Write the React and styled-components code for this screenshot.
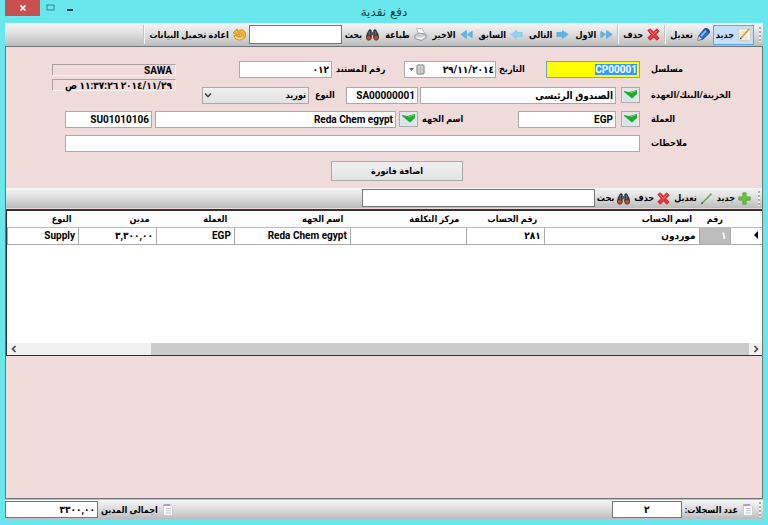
import React, { useEffect, useRef, useState } from "react";
import styled, { createGlobalStyle } from "styled-components";

const GlobalStyle = createGlobalStyle`
  * {
    box-sizing: border-box;
  }
  body {
    margin: 0;
  }
  body, button, input, select, table {
    font-family: Roboto, "DejaVu Sans Condensed", "DejaVu Sans", sans-serif;
    font-size: 10px;
    font-weight: bold;
    line-height: 14px;
    color: #000;
  }
  button, label, th, select {
    font-size: 9px;
  }
`;

const Window = styled.div`
  min-height: 100vh;
  display: flex;
  flex-direction: column;
  background: #69e7ec;
  padding: 0 5px 6px;
`;

const TitleBar = styled.header`
  display: grid;
  grid-template-columns: 1fr auto 1fr;
  height: 23px;
`;

const Title = styled.h1`
  margin: 0;
  padding-top: 3px;
  font-family: "DejaVu Sans", sans-serif;
  font-size: 12px;
  line-height: 18px;
  font-weight: normal;
  color: #16474a;
`;

const WindowButtons = styled.div`
  grid-column: 3;
  display: flex;
  justify-content: flex-end;
`;

const WindowBtn = styled.button`
  width: ${(props) => (props.$close ? "35px" : "20px")};
  height: 16px;
  padding: 0;
  border: 0;
  background: ${(props) => (props.$close ? "#c75050" : "transparent")};
  display: flex;
  align-items: center;
  justify-content: center;
`;

const Bar = styled.div`
  display: flex;
  align-items: center;
  height: ${(props) => props.$height || 23}px;
  padding-right: 2px;
  background: linear-gradient(#f6f6f6, #dcdcdc 50%, #bcbcbc);
`;

const Grip = styled.span`
  width: 2px;
  height: 15px;
  margin-left: 5px;
  background: repeating-linear-gradient(#aaa 0 2px, #f4f4f4 2px 4px);
`;

const ToolBtn = styled.button`
  display: flex;
  align-items: center;
  gap: ${(props) => (props.$compact ? 3 : 4)}px;
  height: 20px;
  padding: 0 ${(props) => (props.$compact ? 1 : 2)}px;
  border: 1px solid ${(props) => (props.$active ? "#5fa5e0" : "transparent")};
  background: ${(props) => (props.$active ? "#c5dff8" : "transparent")};
  white-space: nowrap;
`;

const Divider = styled.span`
  width: 1px;
  height: 19px;
  margin: 0 1px;
  background: #f8f8f8;
  border-left: 1px solid #c4c4c4;
  box-sizing: content-box;
`;

const Input = styled.input`
  height: ${(props) => props.$height || 17}px;
  width: ${(props) => (props.$width ? props.$width + "px" : "auto")};
  flex: ${(props) => (props.$width ? "none" : "1")};
  min-width: 0;
  margin: 0;
  padding: 0 2px;
  border: 1px solid ${(props) => (props.$dark ? "#777" : "#aaa")};
  border-radius: 0;
  outline: none;
  background: #fff;
  text-align: ${(props) => props.$align || "right"};
`;

const SerialInput = styled(Input)`
  background: #ff0;
  border-color: #6ba6c8;
  &::selection {
    background: #3399ff;
    color: #fff;
  }
`;

const Panel = styled.main`
  flex: 1;
  display: flex;
  flex-direction: column;
  background: #f0dbdb;
  border: 1px solid #6e7478;
`;

const Form = styled.form`
  display: flex;
  flex-direction: column;
  padding: 10px 30px 7px 59px;
`;

const FormTop = styled.div`
  display: flex;
  margin-left: -13px;
  justify-content: space-between;
`;

const Fields = styled.div`
  display: flex;
  flex-direction: column;
  gap: 2px;
`;

const Row = styled.div`
  display: flex;
  align-items: center;
  height: 24px;
`;

const Label = styled.label`
  width: ${(props) => props.$width}px;
  flex: none;
  text-align: left;
  white-space: nowrap;
`;

const RowLabel = styled(Label)`
  width: 81px;
  margin-left: 11px;
`;

const Gap = styled.span`
  flex: none;
  width: ${(props) => props.$size}px;
`;

const LookupBtn = styled.button`
  flex: none;
  display: flex;
  align-items: center;
  justify-content: center;
  width: 19px;
  height: 16px;
  padding: 0;
  margin-left: ${(props) => props.$gap}px;
  border: 1px solid #aaa;
  background: #e4e6e8;
`;

const DateBox = styled.div`
  display: flex;
  align-items: center;
  width: 92px;
  height: 17px;
  background: #fff;
  border: 1px solid #aaa;
`;

const DateInput = styled(Input)`
  border: 0;
  height: 15px;
  padding: 0 1px;
`;

const CalendarBtn = styled.button`
  display: flex;
  align-items: center;
  padding: 0 4px;
  border: 0;
  background: transparent;
`;

const SelectWrap = styled.div`
  display: grid;
  width: 107px;
  align-items: center;
  & > * {
    grid-area: 1 / 1;
  }
  svg {
    justify-self: end;
    margin-left: 2px;
    pointer-events: none;
  }
`;

const Select = styled.select`
  appearance: none;
  width: 100%;
  height: 17px;
  padding: 0 2px;
  border: 1px solid #aaa;
  border-radius: 0;
  background: linear-gradient(#f0f0f0, #e2e2e2);
`;

const Info = styled.div`
  width: 124px;
  display: flex;
  flex-direction: column;
  gap: 3px;
  padding-top: 7px;
`;

const InfoLine = styled.div`
  height: 12px;
  line-height: 11px;
  padding-right: 3px;
  border: 1px solid #a9a0a0;
  border-right-color: #faf2f2;
  border-bottom-color: #faf2f2;
  white-space: nowrap;
`;

const AddInvoiceBtn = styled.button`
  align-self: center;
  width: 132px;
  height: 20px;
  margin-top: 6px;
  margin-right: 3px;
  padding: 0;
  border: 1px solid #aaa;
  background: linear-gradient(#f0f0f0, #e4e4e4);
`;

const GridBox = styled.div`
  display: flex;
  flex-direction: column;
  height: 147px;
  margin-top: 1px;
  background: #fff;
  border: 1px solid #333;
  border-top-width: 2px;
  border-right: 0;
`;

const Table = styled.table`
  width: 100%;
  table-layout: fixed;
  border-collapse: collapse;
`;

const Th = styled.th`
  height: 16px;
  padding: 0 7px 0 0;
  text-align: right;
  background: #fcfcfc;
  border-bottom: 1px solid #bbb;
  white-space: nowrap;
`;

const Td = styled.td`
  height: 17px;
  padding: 0 3px 0 0;
  border-left: 1px solid #aaa;
  border-bottom: 1px solid #aaa;
  white-space: nowrap;
  background: ${(props) => (props.$selected ? "#bdbdbd" : "#fff")};
  color: ${(props) => (props.$selected ? "#fff" : "#000")};
`;

const ScrollBar = styled.div`
  display: flex;
  align-items: center;
  direction: ltr;
  height: 12px;
  margin-top: auto;
  background: #f0f0f0;
`;

const ScrollBtn = styled.button`
  width: 13px;
  height: 12px;
  padding: 0;
  border: 0;
  background: transparent;
  display: flex;
  align-items: center;
  justify-content: center;
`;

const Track = styled.div`
  flex: 1;
  display: flex;
  justify-content: flex-end;
`;

const Thumb = styled.div`
  width: 82%;
  height: 12px;
  background: #cbcbcb;
`;

const StatusBar = styled(Bar)`
  margin-top: 1px;
`;

const StatusLabel = styled.label`
  display: flex;
  align-items: center;
  gap: 4px;
  margin-left: 3px;
  white-space: nowrap;
`;

const Spacer = styled.span`
  flex: 1;
`;

const Svg = ({ children, size = 13 }) => (
  <svg width={size} height={size} viewBox="0 0 16 16" aria-hidden="true">
    {children}
  </svg>
);

const NoteIcon = () => (
  <Svg>
    <path d="M1 1h14v14H1z" fill="#fbf8ea" stroke="#c9c5b4" />
    <path d="M3 5h7M3 8h5M3 12h9" stroke="#d5d2c2" />
    <path d="M3 13L14 1" stroke="#e0a52a" strokeWidth="2.4" />
    <path d="M2 14.5l1-2.5 1.500 1z" fill="#333" />
  </Svg>
);

const PencilIcon = () => (
  <Svg>
    <path d="M1 15l1.500-6L9 1q5-1 6.500 5l-8.500 8z" fill="#2b6fc6" stroke="#1c4e94" />
    <path d="M5 10l7-7.500" stroke="#8fc3f5" strokeWidth="2" />
    <path d="M1 15l1.500-5 3.500 3.500z" fill="#f2d6a4" />
    <path d="M9.500 1.500L11 0q4 0 5 4.500L14.500 6z" fill="#254d86" />
  </Svg>
);

const CrossIcon = () => (
  <Svg>
    <path
      d="M1 3l3-2 4 4 4-4 3 3-4 4 4 4.500L12 15l-4-4-4 4-3-3 4-4z"
      fill="#e8373b"
      stroke="#b81b20"
    />
    <path d="M3 3.500l5 4.500 4-4.500" stroke="#ff8b8b" fill="none" />
  </Svg>
);

const ArrowIcon = ({ back, double, pale }) => (
  <Svg>
    <g
      transform={back ? "matrix(-1 0 0 1 16 0)" : undefined}
      fill={pale ? "#8fd4f0" : "#5cb4ea"}
      stroke={pale ? "#79bede" : "#469fd8"}
      strokeWidth=".7"
    >
      {double ? (
        <path d="M1 4l6 4-6 4zM8 3l7 5-7 5z" />
      ) : (
        <path d="M1 5.500h7V3l7 5-7 5v-2.500H1z" />
      )}
    </g>
  </Svg>
);

const PrinterIcon = () => (
  <Svg>
    <path d="M3 1l7-.5 3 6-7 2z" fill="#fff" stroke="#aaa" />
    <path d="M1 9l5-3 9 2v4l-6 3.500L1 13z" fill="#c9ccd0" stroke="#868a90" />
    <path d="M3 12l6 1 4-2" stroke="#f5f5f5" strokeWidth="2" fill="none" />
  </Svg>
);

const BinocularsIcon = () => (
  <Svg>
    <path d="M3 3q2-3 4 0v9H0q0-5 3-9zM9 3q2-3 4 0 3 4 3 9H9z" fill="#34363b" />
    <path d="M6 5h4v4H6z" fill="#55585f" />
    <circle cx="3.500" cy="12" r="3" fill="#b5503c" stroke="#4a2a25" />
    <circle cx="12.500" cy="12" r="3" fill="#b5503c" stroke="#4a2a25" />
    <path d="M4 4v5M12 4v5" stroke="#8b8f98" />
  </Svg>
);

const ReloadIcon = () => (
  <Svg>
    <path
      d="M0 6l5-5 1 3q5-4 8 0 4 6-1 9-6 4-11-1l-1-3h4q2 3 5 1 2-3-2-4L7 6l1 3z"
      fill="#f7b32b"
      stroke="#d08415"
    />
    <path d="M3 11q4 4 9 1" stroke="#ffe08a" fill="none" strokeWidth="1.500" />
  </Svg>
);

const PlusIcon = () => (
  <Svg>
    <path d="M6 1h4v5h5v4h-5v5H6v-5H1V6h5z" fill="#6cc43c" stroke="#4ea52a" />
  </Svg>
);

const GreenPenIcon = () => (
  <Svg>
    <path d="M2 14L14 2" stroke="#5da14c" strokeWidth="2.200" />
    <path d="M3 12L13 2" stroke="#c0e0b4" />
    <path d="M1 15.500l1.500-3 1.500 1.500z" fill="#555" />
  </Svg>
);

const LookupIcon = () => (
  <svg width="15" height="12" viewBox="0 0 15 12" aria-hidden="true">
    <path d="M0 6h13v6H0z" fill="#d5e4ee" />
    <path d="M1 2l5 1 8-2v4l-5 4.500L1 3z" fill="#1faa32" />
    <path d="M7 4l6-2" stroke="#5edc5e" fill="none" />
  </svg>
);

const CalendarIcon = () => (
  <svg width="16" height="11" viewBox="0 0 16 11" aria-hidden="true">
    <path d="M0 4h5L2.500 7z" fill="#4e6a8c" />
    <rect x="8" y="1" width="7" height="9" rx="1" fill="#ddd" stroke="#777" />
    <path d="M9 4h5M9 6h5M9 8h5M11.500 2v8" stroke="#aaa" strokeWidth=".6" />
  </svg>
);

const PageIcon = () => (
  <Svg size={12}>
    <path d="M2 1h9l3 3v11H2z" fill="#fff" stroke="#c2c2d2" />
    <path d="M2 1.500h9" stroke="#9b83d6" strokeWidth="2" />
    <path d="M5 6h7M5 9h7M5 12h7" stroke="#a6a6b6" />
  </Svg>
);

const Chevron = ({ d }) => (
  <svg width="8" height="8" viewBox="0 0 8 8" aria-hidden="true">
    <path d={d} fill="none" stroke="#444" strokeWidth="1.600" />
  </svg>
);

const columns = [
  { title: "", width: 32, value: "" },
  { title: "رقم", width: 31, value: "١" },
  { title: "اسم الحساب", width: 155, value: "موردون" },
  { title: "رقم الحساب", width: 78, value: "٢٨١" },
  { title: "مركز التكلفة", width: 116, value: "" },
  { title: "اسم الجهه", width: 116, value: "Reda Chem egypt" },
  { title: "العملة", width: 78, value: "EGP" },
  { title: "مدين", width: 78, value: "٣,٣٠٠,٠٠" },
  { title: "النوع", width: 71, value: "Supply" },
];

function App() {
  const serialRef = useRef(null);
  const [search, setSearch] = useState("");
  const [lineSearch, setLineSearch] = useState("");

  useEffect(() => {
    serialRef.current.focus();
    serialRef.current.select();
  }, []);

  return (
    <Window dir="rtl" lang="ar">
      <GlobalStyle />
      <TitleBar>
        <span />
        <Title>دفع نقدية</Title>
        <WindowButtons>
          <WindowBtn aria-label="تصغير">
            <svg width="8" height="8">
              <path d="M1 6h6" stroke="#123c40" strokeWidth="2" />
            </svg>
          </WindowBtn>
          <WindowBtn aria-label="تكبير">
            <svg width="9" height="8">
              <rect x="1" y="1" width="7" height="5" fill="none" stroke="#2c8a90" />
            </svg>
          </WindowBtn>
          <WindowBtn $close aria-label="اغلاق">
            <svg width="8" height="8">
              <path d="M1.500 1.500l5 5M6.500 1.500l-5 5" stroke="#fff" strokeWidth="1.600" />
            </svg>
          </WindowBtn>
        </WindowButtons>
      </TitleBar>

      <Bar>
        <Grip />
        <ToolBtn $active><NoteIcon />جديد</ToolBtn>
        <ToolBtn><PencilIcon />تعديل</ToolBtn>
        <Divider />
        <ToolBtn><CrossIcon />حذف</ToolBtn>
        <Divider />
        <ToolBtn><ArrowIcon double />الاول</ToolBtn>
        <ToolBtn><ArrowIcon />التالى</ToolBtn>
        <ToolBtn><ArrowIcon back pale />السابق</ToolBtn>
        <ToolBtn><ArrowIcon back double />الاخير</ToolBtn>
        <ToolBtn><PrinterIcon />طباعة</ToolBtn>
        <ToolBtn><BinocularsIcon />بحث</ToolBtn>
        <Input
          $width={93}
          $height={19}
          $dark
          aria-label="بحث"
          value={search}
          onChange={(e) => setSearch(e.target.value)}
        />
        <ToolBtn><ReloadIcon />اعادة تحميل البيانات</ToolBtn>
        <Divider />
      </Bar>

      <Panel>
        <Form onSubmit={(e) => e.preventDefault()}>
          <FormTop>
            <Fields>
              <Row>
                <RowLabel htmlFor="serial">مسلسل</RowLabel>
                <SerialInput id="serial" ref={serialRef} $width={94} defaultValue="CP00001" />
                <Label $width={47} htmlFor="date">التاريخ</Label>
                <Gap $size={3} />
                <DateBox>
                  <DateInput id="date" defaultValue="٢٩/١١/٢٠١٤" />
                  <CalendarBtn type="button" aria-label="التقويم"><CalendarIcon /></CalendarBtn>
                </DateBox>
                <Label $width={68} htmlFor="document">رقم المستند</Label>
                <Gap $size={4} />
                <Input id="document" $width={93} defaultValue="٠١٢" />
              </Row>
              <Row>
                <RowLabel htmlFor="cashbox">الخزينة/البنك/العهدة</RowLabel>
                <LookupBtn type="button" $gap={5} aria-label="اختيار"><LookupIcon /></LookupBtn>
                <Input id="cashbox" $width={196} defaultValue="الصندوق الرئيسى" />
                <Gap $size={2} />
                <Input $width={72} aria-label="كود الخزينة" defaultValue="SA00000001" />
                <Label $width={31} htmlFor="kind">النوع</Label>
                <Gap $size={6} />
                <SelectWrap>
                  <Select id="kind"><option>توريد</option></Select>
                  <Chevron d="M1 2.500l3 3 3-3" />
                </SelectWrap>
              </Row>
            </Fields>
            <Info>
              <InfoLine>SAWA</InfoLine>
              <InfoLine>٢٠١٤/١١/٢٩ ١١:٣٧:٢٦ ص</InfoLine>
            </Info>
          </FormTop>
          <Row>
            <RowLabel htmlFor="currency">العملة</RowLabel>
            <LookupBtn type="button" $gap={5} aria-label="اختيار"><LookupIcon /></LookupBtn>
            <Input id="currency" $width={98} defaultValue="EGP" />
            <Label $width={96} htmlFor="party">اسم الجهه</Label>
            <Gap $size={4} />
            <LookupBtn type="button" $gap={3} aria-label="اختيار"><LookupIcon /></LookupBtn>
            <Input id="party" defaultValue="Reda Chem egypt" />
            <Gap $size={3} />
            <Input $width={87} aria-label="كود الجهه" defaultValue="SU01010106" />
          </Row>
          <Row>
            <RowLabel htmlFor="notes">ملاحظات</RowLabel>
            <Input id="notes" />
          </Row>
          <AddInvoiceBtn type="button">اضافة فاتورة</AddInvoiceBtn>
        </Form>

        <Bar $height={20}>
          <Grip />
          <ToolBtn $compact><PlusIcon />جديد</ToolBtn>
          <ToolBtn $compact><GreenPenIcon />تعديل</ToolBtn>
          <ToolBtn $compact><CrossIcon />حذف</ToolBtn>
          <ToolBtn $compact><BinocularsIcon />بحث</ToolBtn>
          <Input
            $width={233}
            $height={18}
            $dark
            aria-label="بحث"
            value={lineSearch}
            onChange={(e) => setLineSearch(e.target.value)}
          />
        </Bar>

        <GridBox>
          <Table>
            <colgroup>
              {columns.map((col) => (
                <col key={col.title} style={{ width: `${(col.width / 755) * 100}%` }} />
              ))}
            </colgroup>
            <thead>
              <tr>
                {columns.map((col) => (
                  <Th key={col.title}>{col.title}</Th>
                ))}
              </tr>
            </thead>
            <tbody>
              <tr>
                {columns.map((col, index) => (
                  <Td key={col.title} $selected={index === 1}>
                    {index === 0 ? (
                      <svg width="6" height="8" viewBox="0 0 6 8" aria-hidden="true">
                        <path d="M5 0v8L1 4z" />
                      </svg>
                    ) : (
                      col.value
                    )}
                  </Td>
                ))}
              </tr>
            </tbody>
          </Table>
          <ScrollBar>
            <ScrollBtn aria-label="يسار"><Chevron d="M5.500 1l-3 3 3 3" /></ScrollBtn>
            <Track><Thumb /></Track>
            <ScrollBtn aria-label="يمين"><Chevron d="M2.500 1l3 3-3 3" /></ScrollBtn>
          </ScrollBar>
        </GridBox>
      </Panel>

      <StatusBar $height={19}>
        <Grip />
        <StatusLabel htmlFor="count"><PageIcon />عدد السجلات:</StatusLabel>
        <Input id="count" $width={70} $dark $align="center" readOnly value="٢" />
        <Spacer />
        <StatusLabel htmlFor="total"><PageIcon />اجمالى المدين</StatusLabel>
        <Input id="total" $width={93} $dark readOnly value="٣٣٠٠,٠٠" />
      </StatusBar>
    </Window>
  );
}

export default App;
